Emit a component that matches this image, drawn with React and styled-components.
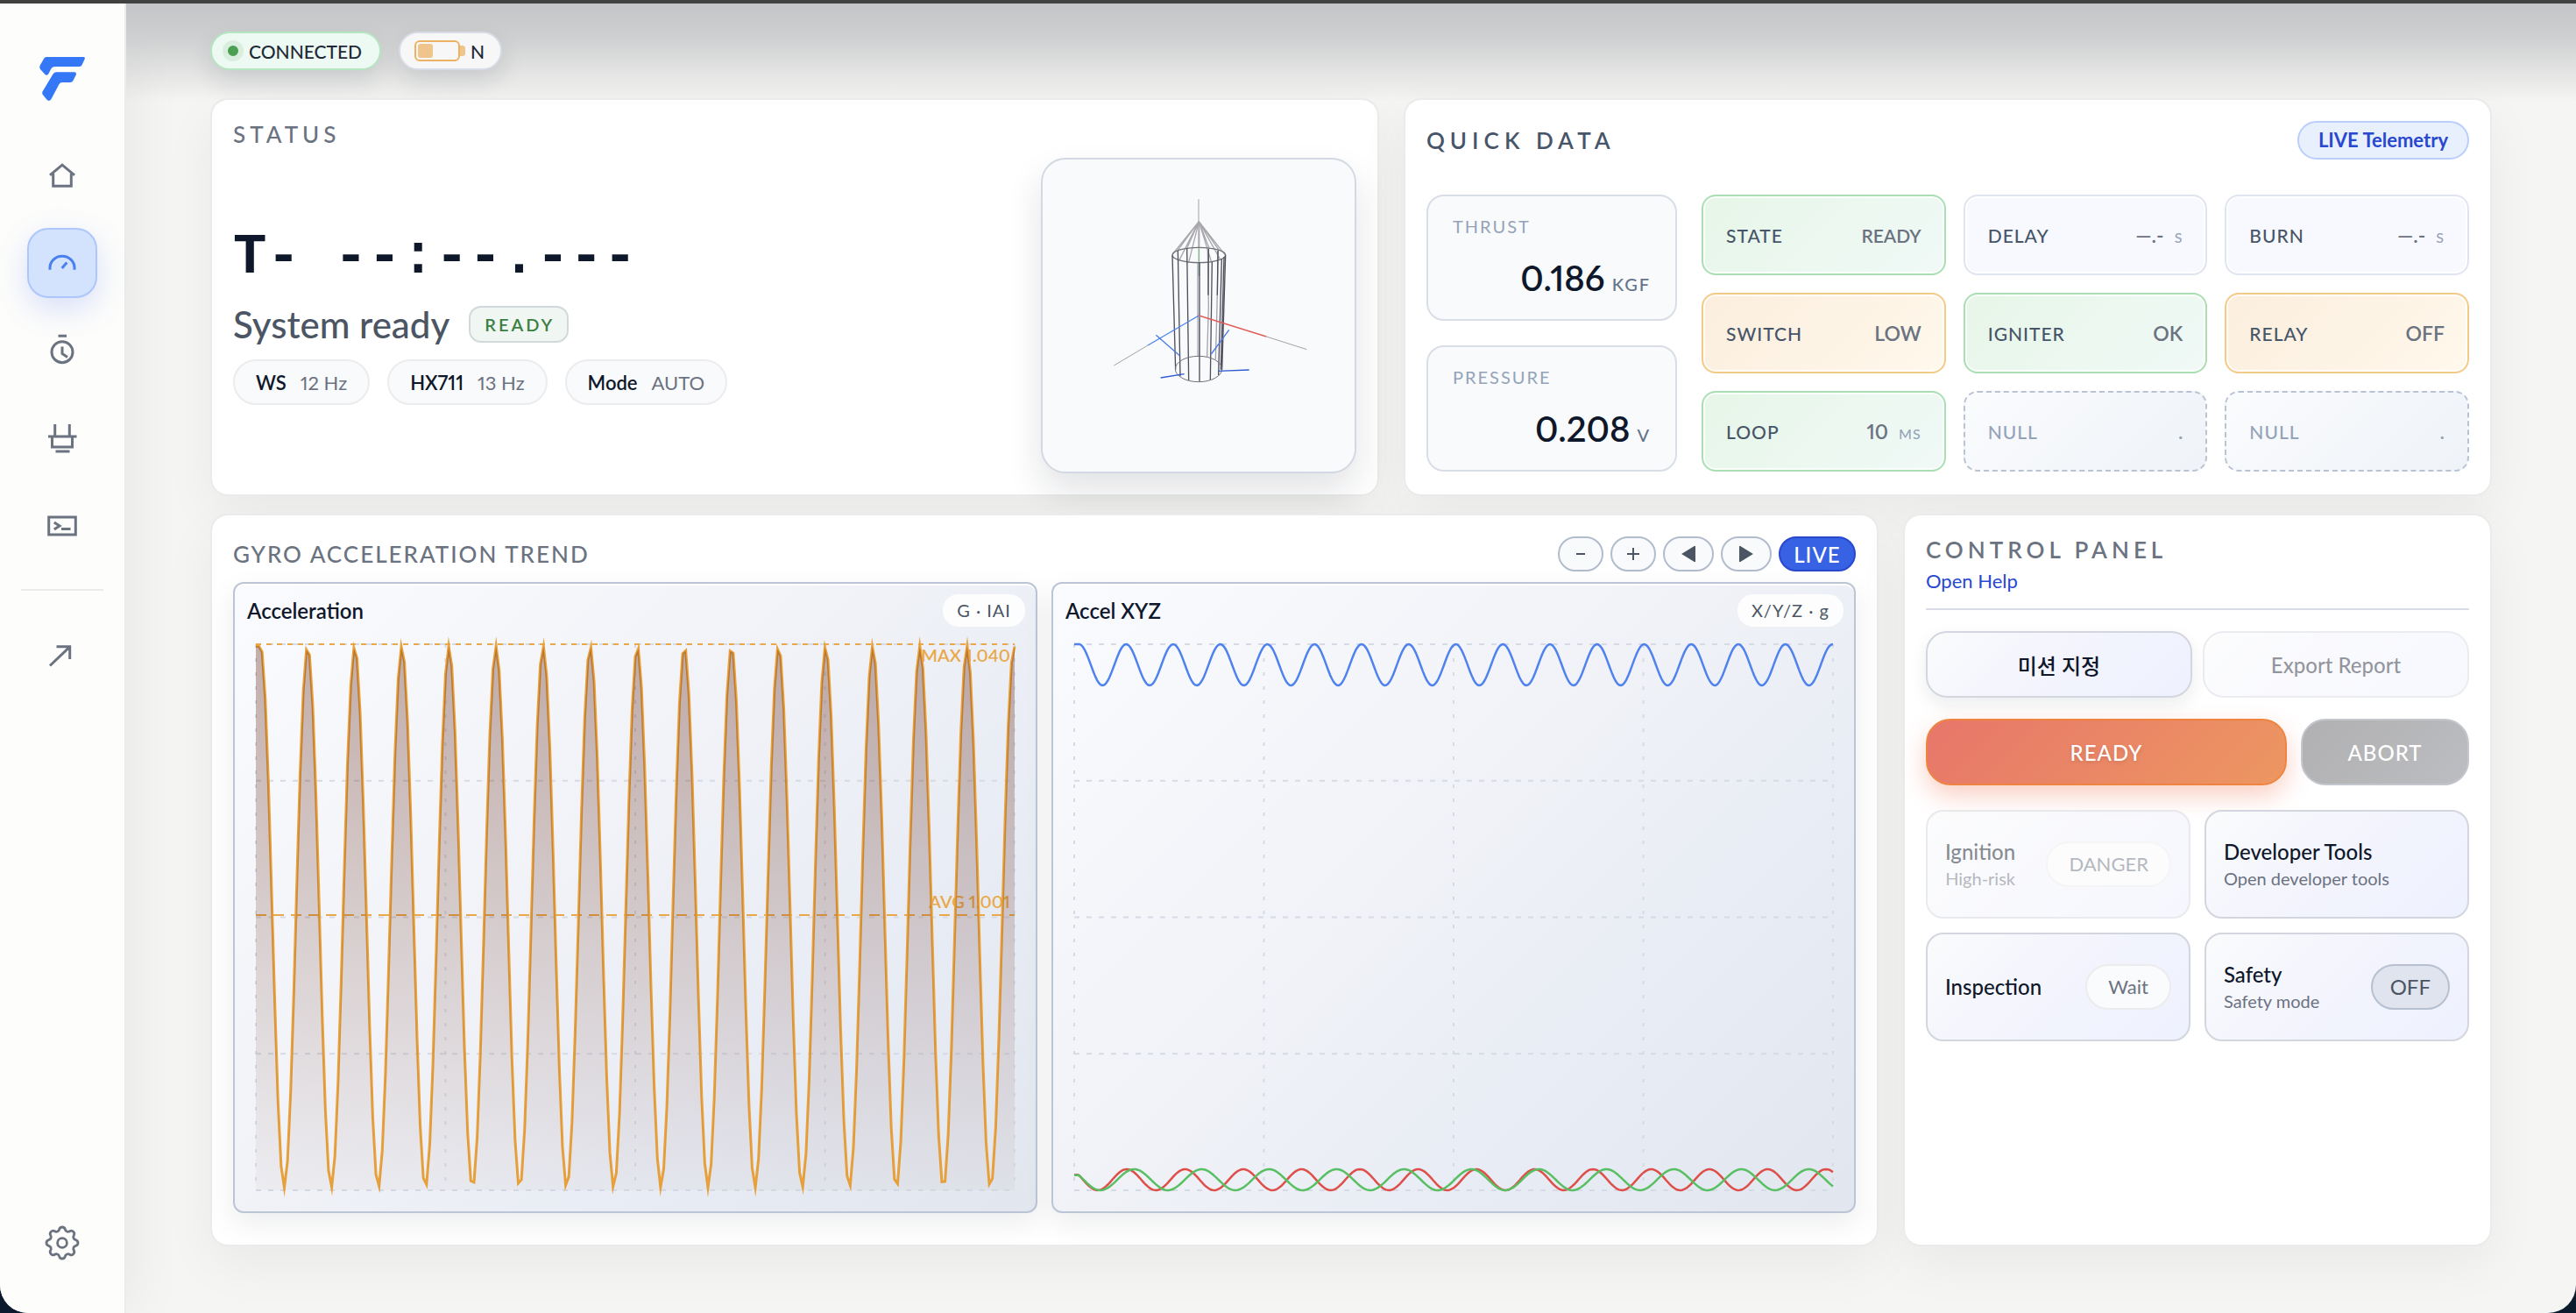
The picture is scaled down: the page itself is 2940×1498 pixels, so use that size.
import React from 'react';
import styled, { createGlobalStyle, css } from 'styled-components';

const color = {
  ink: '#0f172a',
  slate: '#475569',
  text: '#4b5563',
  muted: '#6b7280',
  faint: '#94a3b8',
  blue: '#2848cf',
  line: '#d5d9e2',
  surface: '#f9fafc',
};

const GlobalStyle = createGlobalStyle`
  * {
    box-sizing: border-box;
  }

  body {
    margin: 0;
    background: #0b1a2c;
    color: ${color.ink};
    font-family: Lato, "Noto Sans CJK KR", sans-serif;
    font-size: 22px;
    font-variant-numeric: proportional-nums;
  }

  h2, h3, p, dl, dt, dd {
    margin: 0;
    font-weight: inherit;
    font-size: inherit;
  }

  button {
    font-family: inherit;
    cursor: pointer;
  }

  button:disabled {
    cursor: default;
  }
`;

const Shell = styled.div`
  display: flex;
  min-height: 100vh;
  border-top: 4px solid #414141;
  border-radius: 0 0 32px 32px;
  overflow: hidden;
  background: #f5f5f3;
`;

/* ---------- Sidebar ---------- */

const Sidebar = styled.aside`
  display: flex;
  flex-direction: column;
  align-items: center;
  width: 144px;
  flex: none;
  padding: 60px 0 40px;
  background: #fdfdfb;
  border-right: 2px solid #ebebeb;
  box-shadow: 12px 0 60px rgba(0, 0, 0, 0.05);
`;

const Nav = styled.nav`
  display: flex;
  flex-direction: column;
  align-items: center;
  gap: 20px;
  margin-top: 44px;
  flex: 1;
`;

const NavButton = styled.button`
  display: flex;
  align-items: center;
  justify-content: center;
  width: 80px;
  height: 80px;
  padding: 0;
  border: 2px solid transparent;
  border-radius: 24px;
  background: transparent;
  color: ${color.muted};

  svg {
    fill: none;
    stroke: currentColor;
    stroke-width: 3;
  }

  ${({ $active }) => $active && css`
    background: #d3e2fd;
    border-color: #adc6fb;
    color: #4a7ff0;
    box-shadow: 0 12px 36px rgba(59, 100, 246, 0.2);
  `}
`;

const NavDivider = styled.hr`
  width: 94px;
  height: 2px;
  margin: 12px 0 14px;
  border: 0;
  background: #ebebeb;
`;

/* ---------- Page ---------- */

const Main = styled.main`
  display: flex;
  flex-direction: column;
  flex: 1;
  min-width: 0;
  padding: 0 96px 76px;
  background: linear-gradient(#c4c5c8, #cfd0d1 40px, rgba(245, 245, 243, 0) 112px);
`;

const TopBar = styled.header`
  display: flex;
  gap: 20px;
  padding: 32px 0;
`;

const TopPill = styled.div`
  display: flex;
  align-items: center;
  gap: 6px;
  height: 44px;
  padding: ${({ $ok }) => ($ok ? '0 20px 0 12px' : '0 18px 0 16px')};
  border: 2px solid ${({ $ok }) => ($ok ? '#b4e6bf' : '#d8dce6')};
  border-radius: 22px;
  background: ${({ $ok }) => ($ok ? '#edf9f3' : '#f7f7f8')};
  color: #1f2937;
  font-size: 21px;
  font-weight: 500;
  box-shadow: 0 12px 28px rgba(15, 23, 42, 0.12);
`;

const Dot = styled.span`
  width: 24px;
  height: 24px;
  border: 6px solid #daeee0;
  border-radius: 50%;
  background: #4a9f52;
`;

const Row = styled.div`
  display: grid;
  grid-template-columns: minmax(0, ${({ $ratio }) => $ratio}fr) minmax(0, 1fr);
  gap: 28px;
  flex: ${({ $fill }) => ($fill ? 1 : 'none')};

  & + & {
    margin-top: 20px;
  }
`;

const Card = styled.section`
  display: flex;
  flex-direction: column;
  padding: 24px;
  border: 2px solid #ebebeb;
  border-radius: 20px;
  background: #fff;
  background-clip: padding-box;
  box-shadow: 0 20px 60px rgba(0, 0, 0, 0.05);
`;

const CardHead = styled.div`
  display: flex;
  align-items: center;
  justify-content: space-between;
`;

const CardTitle = styled.h2`
  color: ${({ $dark }) => ($dark ? color.slate : color.muted)};
  font-size: 26px;
  font-weight: ${({ $bold }) => ($bold ? 600 : 500)};
  line-height: 30px;
  letter-spacing: ${({ $spacing }) => $spacing}px;
`;

/* ---------- Status ---------- */

const StatusBody = styled.div`
  display: flex;
  align-items: center;
  justify-content: space-between;
  margin-top: 12px;
`;

const StatusInfo = styled.div`
  display: flex;
  flex-direction: column;
  gap: 16px;
`;

const Clock = styled.div`
  font-family: "Liberation Mono", monospace;
  font-size: 64px;
  font-weight: 700;
  line-height: 72px;
  white-space: pre;
`;

const StatusLine = styled.div`
  display: flex;
  align-items: center;
  gap: 22px;
  color: ${color.text};
  font-size: 42px;
  font-weight: 500;
  line-height: 48px;
`;

const ReadyBadge = styled.span`
  padding: 6px 14px 6px 16px;
  border: 2px solid #d1d9dc;
  border-radius: 14px;
  background: #f0f6f1;
  color: #3b8043;
  font-size: 20px;
  font-weight: 600;
  line-height: 26px;
  letter-spacing: 3px;
`;

const Chips = styled.dl`
  display: flex;
  gap: 20px;
`;

const Chip = styled.div`
  display: flex;
  align-items: center;
  gap: 16px;
  height: 52px;
  padding: 0 24px;
  border: 2px solid #ececee;
  border-radius: 26px;
  background: ${color.surface};

  dt {
    font-weight: 600;
  }

  dd {
    color: ${color.muted};
  }
`;

const RocketView = styled.div`
  width: 360px;
  height: 360px;
  border: 2px solid #d3d8e2;
  border-radius: 28px;
  background: ${color.surface};
  box-shadow: 0 20px 40px rgba(15, 23, 42, 0.12);

  svg {
    display: block;
    width: 100%;
    fill: none;
  }
`;

/* ---------- Quick data ---------- */

const LiveBadge = styled.span`
  padding: 6px 22px;
  border: 2px solid #b9cefa;
  border-radius: 22px;
  background: #e8effd;
  color: ${color.blue};
  font-size: 22px;
  font-weight: 700;
  line-height: 28px;
`;

const QuickGrid = styled.div`
  display: grid;
  grid-template-columns: minmax(0, 0.98fr) minmax(0, 3fr);
  gap: 28px;
  margin-top: 40px;
`;

const Metrics = styled.div`
  display: flex;
  flex-direction: column;
  gap: 28px;
`;

const Metric = styled.div`
  display: flex;
  flex-direction: column;
  justify-content: space-between;
  flex: 1;
  padding: 20px 28px 16px;
  border: 2px solid #d9dde6;
  border-radius: 20px;
  background: ${color.surface};
`;

const MetricLabel = styled.span`
  color: ${color.faint};
  font-size: 20px;
  line-height: 28px;
  letter-spacing: 2px;
`;

const MetricValue = styled.span`
  display: flex;
  align-items: baseline;
  justify-content: flex-end;
  gap: 8px;
  font-size: 40px;
  font-weight: 600;
  line-height: 48px;

  small {
    color: #64748b;
    font-size: 20px;
    font-weight: 500;
    letter-spacing: 2px;
  }
`;

const Tiles = styled.dl`
  display: grid;
  grid-template-columns: repeat(3, minmax(0, 1fr));
  gap: 20px;
`;

const tileTone = {
  ok: css`
    background: linear-gradient(135deg, #e7f6e8, #f0f9f7);
    border: 2px solid #a9dfb3;
  `,
  warn: css`
    background: linear-gradient(135deg, #fbeedd, #fff8ec);
    border: 2px solid #f3ca86;
  `,
  idle: css`
    background: #f8f9fe;
    border: 2px solid #e0e4ee;
  `,
  empty: css`
    background: linear-gradient(135deg, #fafbfd, #eff3f8);
    border: 2px dashed #b9c3d3;
    box-shadow: none;

    dt, dd {
      color: ${color.faint};
    }
  `,
};

const Tile = styled.div`
  display: flex;
  align-items: center;
  justify-content: space-between;
  height: 92px;
  padding: 0 26px;
  border-radius: 16px;
  box-shadow: inset 0 0 0 2px rgba(255, 255, 255, 0.75);

  dt {
    color: ${color.slate};
    font-size: 21px;
    font-weight: 500;
    letter-spacing: 1px;
  }

  dd {
    display: flex;
    align-items: baseline;
    gap: 12px;
    color: ${color.muted};
    font-size: ${({ $long }) => ($long ? 21 : 23)}px;
    font-weight: 600;
  }

  small {
    color: ${color.faint};
    font-size: 16px;
    font-weight: 500;
    letter-spacing: 1px;
  }

  ${({ $tone }) => tileTone[$tone]}
`;

/* ---------- Charts ---------- */

const ChartControls = styled.div`
  display: flex;
  gap: 8px;
`;

const RoundButton = styled.button`
  display: flex;
  align-items: center;
  justify-content: center;
  width: ${({ $wide }) => ($wide ? 58 : 52)}px;
  height: 40px;
  padding: 0;
  border: 2px solid #b2bccd;
  border-radius: 20px;
  background: ${color.surface};
  color: ${color.text};

  svg {
    fill: currentColor;
    stroke: currentColor;
    stroke-width: 2;
  }

  ${({ $live }) => $live && css`
    width: 88px;
    border-color: ${color.blue};
    background: #3662e3;
    color: #fff;
    font-size: 24px;
    font-weight: 500;
    letter-spacing: 1px;
  `}
`;

const Charts = styled.div`
  display: grid;
  grid-template-columns: repeat(2, minmax(0, 1fr));
  gap: 16px;
  margin-top: 12px;
`;

const Chart = styled.figure`
  margin: 0;
  padding: 12px 12px 24px;
  border: 2px solid #bcc5d5;
  border-radius: 12px;
  background: linear-gradient(135deg, #fafbfe, #f0f2f7 45%, #e7ebf4 75%, #e2e6ee);
  box-shadow: inset 0 2px 0 #fff, 0 12px 32px rgba(15, 23, 42, 0.08);
`;

const ChartHead = styled.figcaption`
  display: flex;
  align-items: center;
  justify-content: space-between;
  margin-bottom: 20px;
`;

const ChartTitle = styled.h3`
  padding-left: 2px;
  font-size: 24px;
  font-weight: 600;
`;

const Unit = styled.span`
  padding: 0 16px;
  border-radius: 18px;
  background: rgba(255, 255, 255, 0.85);
  color: ${color.text};
  font-size: 20px;
  line-height: 37px;
  letter-spacing: 1px;
`;

const Plot = styled.svg`
  display: block;
  width: calc(100% - 24px);
  margin: 0 auto;
  overflow: visible;
  fill: none;

  text {
    fill: #e9a94a;
    font-size: 20px;
    font-weight: 600;
    text-anchor: end;
  }
`;

/* ---------- Control panel ---------- */

const PanelHead = styled.div`
  display: flex;
  flex-direction: column;
  align-items: flex-start;
  gap: 6px;
  padding-bottom: 16px;
  border-bottom: 2px solid #d9dce6;
`;

const HelpLink = styled.a`
  color: ${color.blue};
  font-size: 22px;
  line-height: 30px;
  text-decoration: none;
`;

const ButtonRow = styled.div`
  display: grid;
  grid-template-columns: ${({ $columns }) => $columns};
  gap: ${({ $gap }) => $gap}px;
  margin-top: 24px;
`;

const softFill = css`
  border: 2px solid #d3d6de;
  background: linear-gradient(135deg, #fafbfc, #f3f4fd 50%, #eef1fe);
`;

const PlainButton = styled.button`
  height: 76px;
  ${softFill}
  border-radius: 24px;
  color: ${color.ink};
  font-size: 24px;
  font-weight: 500;
  box-shadow: 0 8px 20px rgba(15, 23, 42, 0.08);

  &:disabled {
    opacity: 0.45;
    box-shadow: none;
  }
`;

const ActionButton = styled.button`
  height: 76px;
  border: 2px solid #ee8440;
  border-radius: 28px;
  background: linear-gradient(135deg, #e7766a, #ed9761);
  color: #fff;
  font-size: 24px;
  font-weight: 500;
  letter-spacing: 1px;
  text-shadow: 0 2px 4px rgba(0, 0, 0, 0.12);
  box-shadow: 0 12px 28px rgba(238, 110, 70, 0.32);

  &:disabled {
    border-color: #c3c6cc;
    background: linear-gradient(135deg, #b0b0b1, #bcbdc1);
    text-shadow: none;
    box-shadow: none;
  }
`;

const ToolGrid = styled.div`
  display: grid;
  grid-template-columns: repeat(2, minmax(0, 1fr));
  gap: 16px;
  margin-top: 28px;
`;

const ToolButton = styled.button`
  display: flex;
  align-items: center;
  justify-content: space-between;
  height: 124px;
  padding: 0 20px;
  ${softFill}
  border-radius: 20px;
  color: ${color.ink};
  text-align: ${({ disabled }) => (disabled ? 'center' : 'left')};

  &:disabled {
    opacity: 0.5;
  }
`;

const ToolText = styled.span`
  display: flex;
  flex-direction: column;

  strong {
    font-size: 24px;
    font-weight: 500;
    line-height: 32px;
  }

  small {
    color: ${color.muted};
    font-size: 20px;
    line-height: 28px;
  }
`;

const ToolPill = styled.span`
  padding: 0 ${({ $off }) => ($off ? 20 : 24)}px;
  border: 2px solid ${({ $off }) => ($off ? '#b6c0d0' : '#ececee')};
  border-radius: 26px;
  background: ${({ $off }) => ($off ? '#e0e4ee' : '#fafbfc')};
  color: ${({ $off }) => ($off ? color.text : color.muted)};
  font-size: ${({ $off }) => ($off ? 24 : 22)}px;
  line-height: 48px;
`;

/* ---------- Drawings ---------- */

const Logo = () => (
  <svg width="54" height="52" viewBox="44 64 54 52" fill="#3478f8" aria-label="Logo">
    <path d="M53 65H95.5Q97.500 65 96.600 67.500L93.600 74Q92.700 76 90.500 76H63Q59.500 76 58 79L55.500 84Q53.500 87.300 51 84.500L46 79Q44.600 77.300 45.500 75L50 67Q51 65 53 65Z" />
    <path d="M64.500 82.300H85Q87.700 82.300 86.700 85.500L83.600 91.800Q82.500 94 80 94H71Q68.500 94 67.500 96L58.500 113Q56 116.500 53.300 113.500L48.800 108Q47.800 106.500 48.500 104.500L60.500 84.500Q62 82.300 64.500 82.300Z" />
  </svg>
);

const icons = {
  Home: (
    <>
      <path d="M6 19.800 20 8.200l14 11.600" />
      <path d="M9.700 18v14.200h20.600V18" />
    </>
  ),
  Dashboard: (
    <>
      <path d="M6 27.800v-2.300a14 13.300 0 0 1 28 0v2.300" />
      <path d="m19.700 26 5.600-6.400" />
    </>
  ),
  Timer: (
    <>
      <circle cx="20" cy="21.700" r="12" />
      <path d="M15.500 3.300h9.500M20 15.500v8l6 4" />
    </>
  ),
  Serial: (
    <>
      <path d="M11.700 4v12.500M28.300 4v12.500M4 18h32.500M12.500 35h16" />
      <path d="M8.500 18v12h23V18" />
    </>
  ),
  Terminal: (
    <>
      <rect x="4.700" y="10" width="30.600" height="20" />
      <path d="m10.800 16 6.200 4-6.200 4M19 23.500h10.500" />
    </>
  ),
  Open: <path d="M6 31.500 28.700 9.800M13.500 9.800h15.200V24" />,
};

const Icon = ({ name }) => (
  <svg width="40" height="40" viewBox="0 0 40 40" aria-hidden="true">{icons[name]}</svg>
);

const Cog = () => (
  <svg width="48" height="48" viewBox="0 0 24 24" style={{ strokeWidth: 1.4 }} aria-hidden="true">
    <path d="M10.325 4.317c.426-1.756 2.924-1.756 3.350 0a1.724 1.724 0 002.573 1.066c1.543-.94 3.310.826 2.370 2.370a1.724 1.724 0 001.065 2.572c1.756.426 1.756 2.924 0 3.350a1.724 1.724 0 00-1.066 2.573c.94 1.543-.826 3.310-2.370 2.370a1.724 1.724 0 00-2.572 1.065c-.426 1.756-2.924 1.756-3.350 0a1.724 1.724 0 00-2.573-1.066c-1.543.94-3.310-.826-2.370-2.370a1.724 1.724 0 00-1.065-2.572c-1.756-.426-1.756-2.924 0-3.350a1.724 1.724 0 001.066-2.573c-.94-1.543.826-3.310 2.370-2.370.996.608 2.296.07 2.572-1.065z" />
    <circle cx="12" cy="12" r="2.700" />
  </svg>
);

const Battery = () => (
  <svg width="58" height="24" viewBox="0 0 58 24" aria-label="Battery">
    <rect x="1" y="1" width="50" height="22" rx="5" fill="none" stroke="#edb163" strokeWidth="2" />
    <rect x="4" y="4" width="17" height="16" rx="3" fill="#efc58c" />
    <path d="M52 6h3a3 3 0 0 1 3 3v6a3 3 0 0 1-3 3h-3z" fill="#efc58c" />
  </svg>
);

const Rocket = () => (
  <svg viewBox="90 96 1068 1068" aria-label="Attitude">
    <g stroke="#a9a9ad" strokeWidth="4">
      <path d="M624 232V310" stroke="#c4c5c9" strokeWidth="5" />
      <path d="M625 308 535 420M625 308 553 406M625 308 558 440M625 308 584 400M625 308 590 448M625 308 660 400M625 308 668 447M625 308 693 405M625 308 697 436M625 308 716 424" />
      <path d="M625 308V400" strokeWidth="6" />
    </g>
    <path d="M625 400V495" stroke="#8fb79c" strokeWidth="5" />
    <path d="M621 450V770M655 405 658 600 653 770M691 405 687 600 682 780" stroke="#a3a5ad" strokeWidth="4" />
    <path d="M624 640V770" stroke="#cdced6" strokeWidth="8" />
    <g stroke="#4e4e5c" strokeWidth="4">
      <ellipse cx="625" cy="423" rx="91" ry="26" stroke="#707079" />
      <path d="M534 424 545 815M553 408 561 838M584 400 590 852M627 448V856M658 402 657 560M670 446 664 850M690 408 688 560M703 436 692 834M716 424 704 815M711 430 700 815" />
      <ellipse cx="624" cy="813" rx="80" ry="44" stroke="#707079" strokeWidth="3" />
    </g>
    <g strokeWidth="4">
      <path d="M625 630 450 732" stroke="#4d84ee" />
      <path d="M450 732 334 801M856 702 994 746" stroke="#a3a3a6" strokeWidth="3" />
      <path d="M625 630 856 702" stroke="#e25d5a" />
      <path d="M478 697 559 767M728 679 667 762" stroke="#4a7be0" />
      <path d="M494 843 575 830M692 820 797 816" stroke="#2f5bd0" />
    </g>
  </svg>
);

const PLOT_W = 866;
const PLOT_H = 623;
const HOLD = 5;

const wave = ({ mid, amp, peak, period, step }) => {
  const points = [];
  for (let x = 0; x <= PLOT_W + 0.5; x += step) {
    const t = Math.max(x, HOLD);
    const y = mid - amp * Math.cos((2 * Math.PI * (t - peak)) / period);
    points.push(`${x.toFixed(1)},${y.toFixed(1)}`);
  }
  return points.join(' ');
};

const accel = wave({ mid: 311, amp: 309, peak: 5.4, period: 53.75, step: PLOT_W / 240 });

const axes = [
  { name: 'z', stroke: '#4f82ee', mid: 23.5, amp: 23.5, peak: 5.5, period: 53.75 },
  { name: 'x', stroke: '#de4f4a', mid: 611, amp: 12, peak: 60, period: 66.5 },
  { name: 'y', stroke: '#58bf62', mid: 611, amp: 12, peak: 68.4, period: 77 },
];

const Grid = () => (
  <g stroke="#d5dae5" strokeWidth="2">
    {[0, 1, 2, 3, 4].map((n) => (
      <React.Fragment key={n}>
        <line x1="0" x2={PLOT_W} y1={(PLOT_H * n) / 4} y2={(PLOT_H * n) / 4} strokeDasharray="6 8" />
        <line x1={(PLOT_W * n) / 4} x2={(PLOT_W * n) / 4} y1="0" y2={PLOT_H} strokeDasharray="4 12" />
      </React.Fragment>
    ))}
  </g>
);

const AccelerationPlot = () => (
  <Plot viewBox={`0 0 ${PLOT_W} ${PLOT_H}`}>
    <defs>
      <linearGradient id="accelFill" x1="0" y1="0" x2="0" y2="1">
        <stop offset="0" stopColor="#622716" stopOpacity="0.36" />
        <stop offset="1" stopColor="#622716" stopOpacity="0.03" />
      </linearGradient>
    </defs>
    <Grid />
    <g stroke="#e9a94a" strokeWidth="2">
      <line x1="0" x2={PLOT_W} y1="0" y2="0" strokeDasharray="6 6" />
      <line x1="0" x2={PLOT_W} y1="309" y2="309" strokeDasharray="12 8" />
    </g>
    <text x="861" y="20">MAX 1.040</text>
    <text x="861" y="301">AVG 1.001</text>
    <polyline points={accel} stroke="#e9a23b" strokeWidth="3" strokeMiterlimit="10" />
    <polygon points={`0,${PLOT_H} ${accel} ${PLOT_W},${PLOT_H}`} fill="url(#accelFill)" />
  </Plot>
);

const AxesPlot = () => (
  <Plot viewBox={`0 0 ${PLOT_W} ${PLOT_H}`}>
    <Grid />
    {axes.map(({ name, stroke, ...rest }) => (
      <polyline key={name} points={wave({ ...rest, step: 2 })} stroke={stroke} strokeWidth="2.500" />
    ))}
  </Plot>
);

/* ---------- Data ---------- */

const navItems = ['Home', 'Dashboard', 'Timer', 'Serial', 'Terminal'];

const chips = [
  ['WS', '12 Hz'],
  ['HX711', '13 Hz'],
  ['Mode', 'AUTO'],
];

const metrics = [
  { label: 'THRUST', value: '0.186', unit: 'KGF' },
  { label: 'PRESSURE', value: '0.208', unit: 'V' },
];

const tiles = [
  { label: 'STATE', value: 'READY', tone: 'ok', long: true },
  { label: 'DELAY', value: '—.-', unit: 'S', tone: 'idle' },
  { label: 'BURN', value: '—.-', unit: 'S', tone: 'idle' },
  { label: 'SWITCH', value: 'LOW', tone: 'warn' },
  { label: 'IGNITER', value: 'OK', tone: 'ok' },
  { label: 'RELAY', value: 'OFF', tone: 'warn' },
  { label: 'LOOP', value: '10', unit: 'MS', tone: 'ok' },
  { label: 'NULL', value: '.', tone: 'empty' },
  { label: 'NULL', value: '.', tone: 'empty' },
];

const tools = [
  { title: 'Ignition', sub: 'High-risk', pill: 'DANGER', disabled: true },
  { title: 'Developer Tools', sub: 'Open developer tools' },
  { title: 'Inspection', pill: 'Wait' },
  { title: 'Safety', sub: 'Safety mode', pill: 'OFF', off: true },
];

export default function App() {
  return (
    <>
      <GlobalStyle />
      <Shell>
        <Sidebar>
          <Logo />
          <Nav>
            {navItems.map((name) => (
              <NavButton key={name} $active={name === 'Dashboard'} aria-label={name}>
                <Icon name={name} />
              </NavButton>
            ))}
            <NavDivider />
            <NavButton aria-label="Open"><Icon name="Open" /></NavButton>
          </Nav>
          <NavButton aria-label="Settings"><Cog /></NavButton>
        </Sidebar>

        <Main>
          <TopBar>
            <TopPill $ok><Dot />CONNECTED</TopPill>
            <TopPill><Battery />N</TopPill>
          </TopBar>

          <Row $ratio={1.074}>
            <Card>
              <CardTitle $spacing={5}>STATUS</CardTitle>
              <StatusBody>
                <StatusInfo>
                  <Clock>T- --:--.---</Clock>
                  <StatusLine>System ready<ReadyBadge>READY</ReadyBadge></StatusLine>
                  <Chips>
                    {chips.map(([label, value]) => (
                      <Chip key={label}>
                        <dt>{label}</dt>
                        <dd>{value}</dd>
                      </Chip>
                    ))}
                  </Chips>
                </StatusInfo>
                <RocketView><Rocket /></RocketView>
              </StatusBody>
            </Card>

            <Card>
              <CardHead>
                <CardTitle $dark $bold $spacing={6}>QUICK DATA</CardTitle>
                <LiveBadge>LIVE Telemetry</LiveBadge>
              </CardHead>
              <QuickGrid>
                <Metrics>
                  {metrics.map(({ label, value, unit }) => (
                    <Metric key={label}>
                      <MetricLabel>{label}</MetricLabel>
                      <MetricValue>{value}<small>{unit}</small></MetricValue>
                    </Metric>
                  ))}
                </Metrics>
                <Tiles>
                  {tiles.map(({ label, value, unit, tone, long }, index) => (
                    <Tile key={index} $tone={tone} $long={long}>
                      <dt>{label}</dt>
                      <dd>{value}{unit && <small>{unit}</small>}</dd>
                    </Tile>
                  ))}
                </Tiles>
              </QuickGrid>
            </Card>
          </Row>

          <Row $ratio={2.833} $fill>
            <Card>
              <CardHead>
                <CardTitle $spacing={2}>GYRO ACCELERATION TREND</CardTitle>
                <ChartControls>
                  <RoundButton aria-label="Zoom out">
                    <svg width="16" height="16" viewBox="0 0 16 16"><path d="M3 8h10" /></svg>
                  </RoundButton>
                  <RoundButton aria-label="Zoom in">
                    <svg width="16" height="16" viewBox="0 0 16 16"><path d="M1 8h14M8 1v14" /></svg>
                  </RoundButton>
                  <RoundButton $wide aria-label="Back">
                    <svg width="16" height="18" viewBox="0 0 16 18"><path d="M15 1v16L2 9z" /></svg>
                  </RoundButton>
                  <RoundButton $wide aria-label="Forward">
                    <svg width="16" height="18" viewBox="0 0 16 18"><path d="M1 1v16l13-8z" /></svg>
                  </RoundButton>
                  <RoundButton $live>LIVE</RoundButton>
                </ChartControls>
              </CardHead>
              <Charts>
                <Chart>
                  <ChartHead>
                    <ChartTitle>Acceleration</ChartTitle>
                    <Unit>G · IAI</Unit>
                  </ChartHead>
                  <AccelerationPlot />
                </Chart>
                <Chart>
                  <ChartHead>
                    <ChartTitle>Accel XYZ</ChartTitle>
                    <Unit>X/Y/Z · g</Unit>
                  </ChartHead>
                  <AxesPlot />
                </Chart>
              </Charts>
            </Card>

            <Card>
              <PanelHead>
                <CardTitle $bold $spacing={5}>CONTROL PANEL</CardTitle>
                <HelpLink href="#help">Open Help</HelpLink>
              </PanelHead>
              <ButtonRow $columns="1fr 1fr" $gap={12}>
                <PlainButton>미션 지정</PlainButton>
                <PlainButton disabled>Export Report</PlainButton>
              </ButtonRow>
              <ButtonRow $columns="2.146fr 1fr" $gap={16}>
                <ActionButton>READY</ActionButton>
                <ActionButton disabled>ABORT</ActionButton>
              </ButtonRow>
              <ToolGrid>
                {tools.map(({ title, sub, pill, disabled, off }) => (
                  <ToolButton key={title} disabled={disabled}>
                    <ToolText>
                      <strong>{title}</strong>
                      {sub && <small>{sub}</small>}
                    </ToolText>
                    {pill && <ToolPill $off={off}>{pill}</ToolPill>}
                  </ToolButton>
                ))}
              </ToolGrid>
            </Card>
          </Row>
        </Main>
      </Shell>
    </>
  );
}
